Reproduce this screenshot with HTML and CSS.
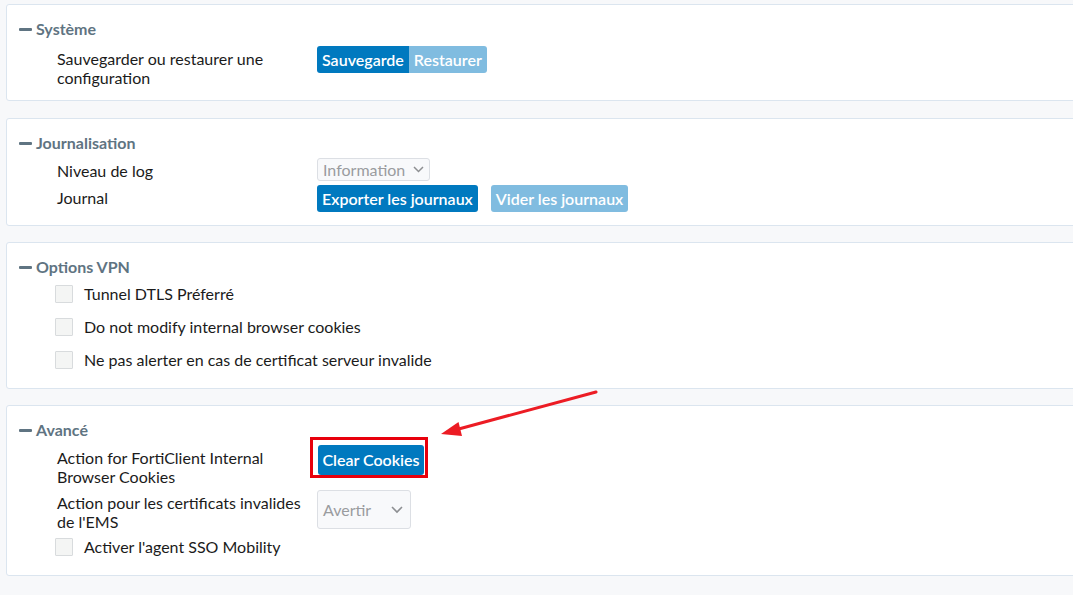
FILE: index.html
```html
<!DOCTYPE html>
<html lang="fr">
<head>
    <meta charset="UTF-8">
    <title>Paramètres</title>
    <link rel="stylesheet" href="styles.css">
</head>
<body>
    <div class="page">
        <div class="card card-sys">
            <div class="card-title"><span class="dash"></span>Système</div>
            <div class="rows">
                <div class="row row-first">
                    <div class="label">Sauvegarder ou restaurer une configuration</div>
                    <div class="btn-group">
                        <button class="btn">Sauvegarde</button><button class="btn btn-light">Restaurer</button>
                    </div>
                </div>
            </div>
        </div>

        <div class="card card-log">
            <div class="card-title"><span class="dash"></span>Journalisation</div>
            <div class="rows">
                <div class="row">
                    <div class="label">Niveau de log</div>
                    <div class="select select-small">
                        <span>Information</span>
                        <svg width="11" height="7" viewBox="0 0 11 7"><path d="M1 1l4.5 4.5L10 1" fill="none" stroke="#8d8f92" stroke-width="1.5"/></svg>
                    </div>
                </div>
                <div class="row">
                    <div class="label">Journal</div>
                    <div class="btn-row">
                        <button class="btn">Exporter les journaux</button>
                        <button class="btn btn-light">Vider les journaux</button>
                    </div>
                </div>
            </div>
        </div>

        <div class="card card-vpn">
            <div class="card-title"><span class="dash"></span>Options VPN</div>
            <div class="rows">
                <label class="check"><span class="box"></span>Tunnel DTLS Préferré</label>
                <label class="check"><span class="box"></span>Do not modify internal browser cookies</label>
                <label class="check"><span class="box"></span>Ne pas alerter en cas de certificat serveur invalide</label>
            </div>
        </div>

        <div class="card card-adv">
            <div class="card-title"><span class="dash"></span>Avancé</div>
            <div class="rows">
                <div class="row">
                    <div class="label">Action for FortiClient Internal Browser Cookies</div>
                    <div class="marked">
                        <button class="btn btn-tall">Clear Cookies</button>
                        <span class="red-box"></span>
                    </div>
                </div>
                <div class="row">
                    <div class="label">Action pour les certificats invalides de l'EMS</div>
                    <div class="select select-big">
                        <span>Avertir</span>
                        <svg width="12" height="8" viewBox="0 0 12 8"><path d="M1 1l5 5 5-5" fill="none" stroke="#8d8f92" stroke-width="1.6"/></svg>
                    </div>
                </div>
                <label class="check"><span class="box"></span>Activer l'agent SSO Mobility</label>
            </div>
        </div>
    </div>

    <svg class="arrow" width="1073" height="595" viewBox="0 0 1073 595">
        <line x1="596" y1="392" x2="455" y2="430" stroke="#ec1c24" stroke-width="3" stroke-linecap="round"/>
        <polygon points="441,434 458.5,422 462,436" fill="#ec1c24"/>
    </svg>
</body>
</html>
```

FILE: styles.css
```css
* {
    margin: 0;
    padding: 0;
    box-sizing: border-box;
}
html, body {
    overflow: hidden;
}
body {
    background: #f7f8fa;
    font-family: Lato, "Open Sans", sans-serif;
    font-size: 16px;
    color: #1b1b1b;
    width: 1073px;
    height: 595px;
    position: relative;
}
.page {
    padding: 4px 0 0 6px;
    width: 1100px;
}
.card {
    background: #fff;
    border: 1px solid #dbe5ef;
    border-radius: 3px;
    padding: 14px 12px 12px;
    margin-bottom: 16px;
}
.card-sys {
    padding-bottom: 13px;
    margin-bottom: 17px;
}
.card-log {
    padding-bottom: 13px;
}
.card-vpn, .card-adv {
    padding-bottom: 11px;
}
.card-title {
    display: flex;
    align-items: center;
    gap: 4px;
    line-height: 20px;
    font-weight: bold;
    color: #5f7482;
}
.dash {
    width: 13px;
    height: 3px;
    border-radius: 1px;
    background: #5f7482;
}
.rows {
    margin-top: 5px;
    padding-left: 38px;
    display: flex;
    flex-direction: column;
    gap: 4px;
}
.row {
    display: grid;
    grid-template-columns: 260px auto;
    align-items: start;
}
.row-first {
    margin-top: 2px;
}
.label {
    padding-top: 3px;
    line-height: 19px;
    padding-right: 14px;
}
.btn-group {
    display: flex;
}
.btn-row {
    display: flex;
    gap: 13px;
}
.btn {
    font-family: inherit;
    font-size: 16px;
    font-weight: 600;
    color: #fff;
    background: #0079bf;
    border: none;
    border-radius: 3px;
    height: 27px;
    padding: 0 5px;
    line-height: 27px;
}
.btn-light {
    background: #80bce0;
}
.btn-group .btn:first-child {
    border-radius: 3px 0 0 3px;
}
.btn-group .btn:last-child {
    border-radius: 0 3px 3px 0;
}
.btn-tall {
    height: 30px;
    line-height: 30px;
    width: 106px;
    padding: 0;
}
.marked {
    position: relative;
    justify-self: start;
    margin-left: 1px;
}
.red-box {
    position: absolute;
    left: -8px;
    top: -8px;
    width: 118px;
    height: 41px;
    border: 3px solid #e8000c;
}
.select {
    display: flex;
    align-items: center;
    justify-content: space-between;
    justify-self: start;
    background: #f8f9fb;
    border: 1px solid #dcdfe4;
    border-radius: 3px;
    color: #9a9c9f;
    padding: 0 5px;
}
.select-small {
    width: 113px;
    height: 23px;
}
.select-big {
    width: 94px;
    height: 39px;
    padding-right: 7px;
}
.check {
    display: flex;
    align-items: flex-start;
    height: 29px;
    margin-left: -2px;
    line-height: 24px;
}
.box {
    width: 18px;
    height: 18px;
    margin-top: 3px;
    margin-right: 11px;
    background: #f4f5f4;
    border: 1px solid #d8dbdd;
    border-radius: 1px;
}
.arrow {
    position: absolute;
    left: 0;
    top: 0;
    pointer-events: none;
}
```
